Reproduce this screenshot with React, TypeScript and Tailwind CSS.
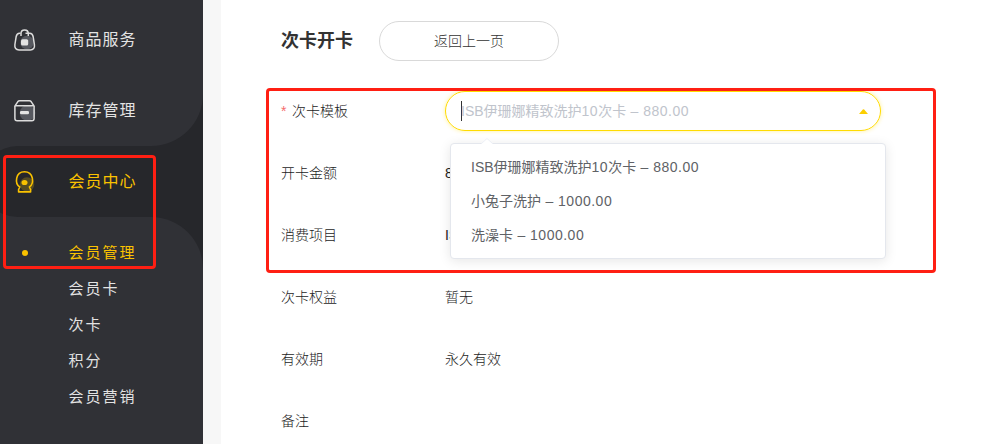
const subItems = ['会员管理', '会员卡', '次卡', '积分', '会员营销'];

type Option = {
  name: string;
  price: string;
  prefix?: string;
  count?: string;
  unit?: string;
};

const options: Option[] = [
  { name: '伊珊娜精致洗护', prefix: 'ISB', count: '10', unit: '次卡', price: '880.00' },
  { name: '小兔子洗护', price: '1000.00' },
  { name: '洗澡卡', price: '1000.00' },
];

const details = [
  { label: '开卡金额', value: '8' },
  { label: '消费项目', value: 'IS' },
  { label: '次卡权益', value: '暂无' },
  { label: '有效期', value: '永久有效' },
  { label: '备注', value: '' },
];

function OptionText({ option }: { option: Option }) {
  return (
    <span className="font-normal whitespace-pre">
      {option.prefix}
      {option.name}
      <span className="tracking-[0.5px]">{option.count}</span>
      {option.unit}
      <span className="tracking-[0.5px]">{` – ${option.price}`}</span>
    </span>
  );
}

function BagIcon() {
  return (
    <svg width="24" height="25" viewBox="0 -1 24 25" fill="none">
      <circle cx="14" cy="14.5" r="6.8" fill="#56585f" />
      <path
        d="M7.500 5.300H6.500C4.500 5.300 3.600 6.500 3.200 8.500L1.900 16.500C1.400 20 3 21.900 6 21.900H17.300C20.300 21.900 21.900 20 21.400 16.500L20.100 8.500C19.700 6.500 18.800 5.300 16.800 5.300H12.500"
        stroke="#dcdcdc"
        strokeWidth="1.5"
      />
      <path
        d="M8 8V5.500C8 0.800 15.300 0.800 15.300 5.500V8"
        stroke="#dcdcdc"
        strokeWidth="1.5"
      />
      <rect x="8" y="11.3" width="7.2" height="6.2" rx="1.5" fill="#e3e3e3" />
    </svg>
  );
}

function BoxIcon() {
  return (
    <svg width="24" height="25" viewBox="0 -1 24 25" fill="none">
      <circle cx="14.5" cy="14" r="7.8" fill="#56585f" />
      <path
        d="M2 6.800H21L18.300 2.800C17.700 2 17.200 1.700 16.300 1.700H6.700C5.800 1.700 5.300 2 4.700 2.800Z"
        stroke="#dcdcdc"
        strokeWidth="1.5"
        strokeLinejoin="round"
      />
      <path
        d="M1.900 7V19.500C1.900 21 2.700 21.800 4.200 21.800H18.800C20.300 21.800 21.100 21 21.100 19.500V7"
        stroke="#dcdcdc"
        strokeWidth="1.5"
      />
      <rect x="7" y="12" width="9" height="3.2" rx="1.3" fill="#e3e3e3" />
    </svg>
  );
}

function MemberIcon() {
  return (
    <svg width="24" height="25" viewBox="0 -1 24 25" fill="none">
      <circle cx="14" cy="14.5" r="7.2" fill="#574d22" />
      <path
        d="M6.800 17C1.500 13.500 2.300 1.700 11.500 1.700C20.700 1.700 21.500 13.500 16.400 17L17.600 19.500V21.900H5.600V19.500Z"
        stroke="#fac200"
        strokeWidth="1.6"
        strokeLinejoin="round"
      />
      <ellipse cx="11.5" cy="12.5" rx="3" ry="2.6" fill="#fac200" />
    </svg>
  );
}

function Sidebar() {
  return (
    <aside className="flex w-[203px] shrink-0 flex-col bg-[#26272b] text-base leading-none tracking-[1px] text-[#e3e3e3]">
      <div className="h-[146px] rounded-br-[52px] bg-[#303136] pt-1">
        <div className="flex h-[71px] items-center gap-[31.5px] pl-[13px]">
          <BagIcon />
          <span>商品服务</span>
        </div>
        <div className="flex h-[71px] items-center gap-[31.5px] pl-[13px]">
          <BoxIcon />
          <span>库存管理</span>
        </div>
      </div>
      <div className="h-[71px] overflow-hidden bg-linear-to-r from-[#303136] from-[18px] to-[#26272b] to-[18px]">
        <div className="-ml-[18px] flex h-full items-center gap-[31.5px] rounded-l-full bg-[#26272b] pl-[31px] text-[#fac200]">
          <MemberIcon />
          <span>会员中心</span>
        </div>
      </div>
      <ul className="flex-1 rounded-tr-[52px] bg-[#303136] pt-[17px] text-[15px] tracking-[2px]">
        {subItems.map((item, i) => (
          <li
            key={item}
            className={
              i === 0
                ? 'flex h-9 items-center text-[#fac200]'
                : 'flex h-9 items-center'
            }
          >
            <span className="flex w-[68.5px] pt-0.5 pl-[22px]">
              {i === 0 && <i className="size-1.5 rounded-full bg-[#fac200]" />}
            </span>
            <span>{item}</span>
          </li>
        ))}
      </ul>
    </aside>
  );
}

function TemplateSelect() {
  return (
    <div className="relative w-[436px]">
      <div className="flex h-10 items-center rounded-full border border-[#ffdb00] pr-3 pl-[15px] text-[#c0c4cc] shadow-[0_0_4px_rgba(255,219,0,0.4)]">
        <i className="-mr-px h-5 w-px bg-[#333]" />
        <OptionText option={options[0]} />
        <svg className="ml-auto" width="9" height="5" viewBox="0 0 9 5">
          <path d="M0 5L3.800 0.500Q4.500 0 5.200 0.500L9 5Z" fill="#fccf00" />
        </svg>
      </div>
      <div className="absolute top-[52px] left-[5px] z-10 w-[436px] rounded border border-[#e4e7ed] bg-white py-1.5 text-[#606266] shadow-[0_2px_12px_rgba(0,0,0,0.1)]">
        <svg
          className="absolute -top-[6px] left-[30px]"
          width="12"
          height="7"
          viewBox="0 0 12 7"
        >
          <path d="M0 6L6 0L12 6V7H0Z" fill="#fff" />
          <path d="M0 6L6 0.500L12 6" fill="none" stroke="#ebeef5" />
        </svg>
        {options.map((option) => (
          <div key={option.name} className="flex h-[34px] items-center px-5">
            <OptionText option={option} />
          </div>
        ))}
      </div>
    </div>
  );
}

export default function App() {
  return (
    <div className="relative flex h-[444px] w-[1008px] overflow-hidden bg-white font-['Liberation_Sans','Noto_Sans_CJK_SC',sans-serif]">
      <Sidebar />
      <div className="w-[18px] shrink-0 bg-[#f7f7f7]" />
      <main className="flex-1 pt-[21px] pl-[60px] text-sm leading-5 font-light text-[#1c1c1c]">
        <header className="flex items-center gap-[26px]">
          <h1 className="text-lg leading-none font-bold text-[#333]">次卡开卡</h1>
          <button className="h-10 w-[180px] rounded-full border border-[#d9d9d9] text-[#333]">
            返回上一页
          </button>
        </header>
        <div className="mt-[30px] flex flex-col gap-[22px]">
          <div className="flex h-10 items-center">
            <div className="w-[164px]">
              <span className="mr-[5.5px] text-[#f56c6c]">*</span>次卡模板
            </div>
            <TemplateSelect />
          </div>
          {details.map((row) => (
            <div key={row.label} className="flex h-10 items-center">
              <div className="w-[164px]">{row.label}</div>
              <div>{row.value}</div>
            </div>
          ))}
        </div>
      </main>
      <div className="absolute top-[155px] left-[3px] h-[114px] w-[153px] rounded border-3 border-[#ff1f13]" />
      <div className="absolute top-[88px] left-[266px] z-20 h-[185px] w-[670px] rounded border-3 border-[#ff1f13]" />
    </div>
  );
}
